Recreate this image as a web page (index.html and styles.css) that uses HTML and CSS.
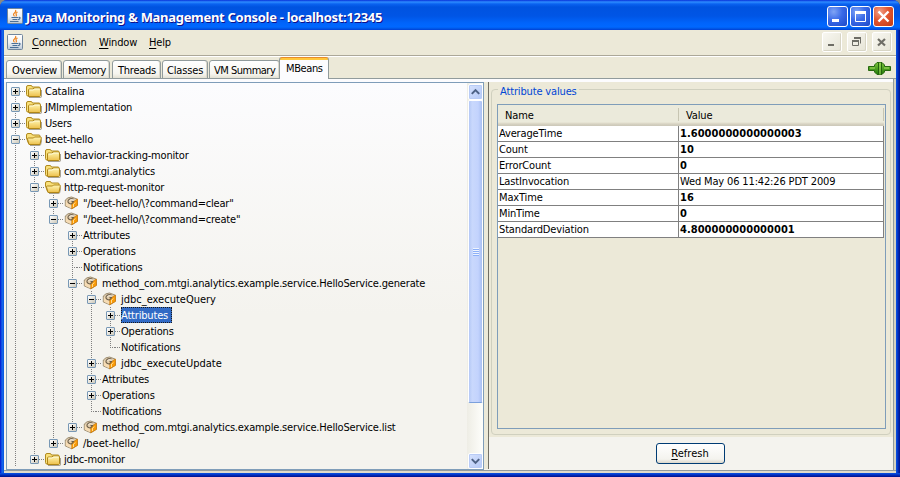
FILE: index.html
```html
<!DOCTYPE html>
<html lang="en">
<head>
<meta charset="utf-8">
<title>Java Monitoring &amp; Management Console</title>
<link rel="stylesheet" href="styles.css">
</head>
<body>
<svg width="0" height="0" class="defs">
  <defs>
    <linearGradient id="gold" x1="0" y1="0" x2="0" y2="1"><stop offset="0" stop-color="#fff6b4"/><stop offset="1" stop-color="#edc04a"/></linearGradient>
    <linearGradient id="tile" x1="0" y1="0" x2="0" y2="1"><stop offset="0" stop-color="#ffffff"/><stop offset=".55" stop-color="#eef1f4"/><stop offset="1" stop-color="#b9c7d6"/></linearGradient>
    <linearGradient id="plug" x1="0" y1="0" x2="0" y2="1"><stop offset="0" stop-color="#7cc43c"/><stop offset="1" stop-color="#1f7a06"/></linearGradient>
    <symbol id="folder" viewBox="0 0 16 16">
      <path d="M3 14.500h11.500q1 0 1-1V7" fill="none" stroke="#6f6850" stroke-opacity=".6"/>
      <path d="M.5 11.500V4q0-1.500 1.500-1.500h3q1 0 1.500 1.500h6.500q1 0 1 1v8h-12q-1.500 0-1.500-1.500z" fill="#f9e07a" stroke="#b08a20"/>
      <path d="M2.500 13.500V7q0-1 1-1h3.500l1-1h5.500q1 0 1 1v6.500q0 1-1 1z" fill="url(#gold)" stroke="#b08618"/>
      <path d="M3.500 7h4l1-1h5" fill="none" stroke="#fffde0" stroke-width=".9"/>
    </symbol>
    <symbol id="open" viewBox="0 0 16 16">
      <path d="M4 14.500h9.500q1 0 1.200-1L16 8" fill="none" stroke="#6f6850" stroke-opacity=".6"/>
      <path d="M2.500 12.500L.5 7V4Q.5 2.500 2 2.500h3q1 0 1.500 1.500h6.500q1 0 1 1V12z" fill="#f9e07a" stroke="#b08a20"/>
      <path d="M3 13.500L1.500 8q-.2-1 .8-1h5.200l1-1h6q1 0 .8 1l-1.300 6.500z" fill="url(#gold)" stroke="#b08618"/>
    </symbol>
    <symbol id="bean" viewBox="0 0 16 16">
      <path d="M1.300 5L4 2.800 7.500 2l5.500 2 .5 6L8 13.800 1.300 11z" fill="#e0cdae" stroke="#948468" stroke-width=".9"/>
      <path d="M7.500 8l6-4v6.500l-6 3.300z" fill="#f99a06" stroke="#c87a10" stroke-width=".7"/>
      <path d="M1.800 6l5.500 2v5.200l-5.500-2.500z" fill="#f6dcb4"/>
      <path d="M9.500 4Q6 2.800 4.500 5t1 3.500 4-2H7.500" fill="none" stroke="#6e604c" stroke-width="1.100"/>
      <path d="M5.500 5.500Q7 3.800 9.500 5" fill="none" stroke="#fffaf0" stroke-width=".8"/>
      <path d="M9.500 12V9l2-1.300" fill="none" stroke="#ffe2a0" stroke-width=".9"/>
    </symbol>
    <symbol id="java" viewBox="0 0 16 16">
      <rect x=".5" y=".5" width="15" height="15" rx="1" fill="url(#tile)" stroke="#71869c"/>
      <path d="M8.500 2Q9.500 3.500 7.500 5T7.500 8.300M10.500 4Q8 5.500 9.500 7L8.800 8.500" fill="none" stroke="#ee8118" stroke-width="1.100"/>
      <path d="M4.500 9.500h6.500M11.500 9.500q2-.5 1.500.8t-2 1.200M5.500 11.500h5M3 13.500h8.500" fill="none" stroke="#4a7098" stroke-width="1.100"/>
    </symbol>
  </defs>
</svg>
<div class="window">
  <header class="titlebar">
    <svg class="app"><use href="#java"/></svg>
    <h1>Java Monitoring &amp; Management Console - localhost:12345</h1>
    <div class="wbtns">
      <span class="wb"><svg viewBox="0 0 19 19"><path d="M4 13.500h7" stroke="#fff" stroke-width="3"/></svg></span>
      <span class="wb"><svg viewBox="0 0 19 19"><path d="M4 5.500h11" stroke="#fff" stroke-width="3"/><path d="M4.500 5v9.500h10V5" fill="none" stroke="#fff"/></svg></span>
      <span class="wb close"><svg viewBox="0 0 19 19"><path d="M4.500 4.500l10 10M14.500 4.500l-10 10" stroke="#fff" stroke-width="2.400"/></svg></span>
    </div>
  </header>
  <nav class="menubar">
    <svg class="app"><use href="#java"/></svg>
    <span class="m1"><u>C</u>onnection</span><span class="m2"><u>W</u>indow</span><span class="m3"><u>H</u>elp</span>
    <div class="ibtns">
      <span><svg viewBox="0 0 18 18"><path d="M5 12h6" stroke="#6e6d66" stroke-width="2"/></svg></span>
      <span><svg viewBox="0 0 18 18"><path d="M6 5h7M4 8h7" stroke="#6e6d66" stroke-width="2"/><path d="M12.500 5v5.500M4.500 8v4.500h6V8" fill="none" stroke="#6e6d66"/></svg></span>
      <span><svg viewBox="0 0 18 18"><path d="M5 6l7 6.500M12 6l-7 6.500" stroke="#6e6d66" stroke-width="2.200"/></svg></span>
    </div>
  </nav>
  <div class="tabs">
    <span class="tab t1">Overview</span><span class="tab t2">Memory</span><span class="tab t3">Threads</span><span class="tab t4">Classes</span><span class="tab t5">VM Summary</span><span class="tab t6 on">MBeans</span>
    <svg class="plug" viewBox="0 0 24 14"><path d="M.5 5h6V3.500L9 1h5l2.500 2.500V5h6v4h-6v1.500L14 13H9l-2.500-2.500V9h-6z" fill="url(#plug)" stroke="#27680f"/><path d="M10.500 1v12M13.500 1v12" stroke="#23620c"/><path d="M12 1v12M2 6.500h5M16 6.500h5" stroke="#a5dd63"/></svg>
  </div>
  <main class="pane">
    <section class="treebox">
      <ul class="tree">
        <li><div class="row"><i class="ex plus"></i><svg><use href="#folder"/></svg><b>Catalina</b></div></li>
        <li><div class="row"><i class="ex plus"></i><svg><use href="#folder"/></svg><b>JMImplementation</b></div></li>
        <li><div class="row"><i class="ex plus"></i><svg><use href="#folder"/></svg><b>Users</b></div></li>
        <li class="more"><div class="row"><i class="ex"></i><svg><use href="#open"/></svg><b>beet-hello</b></div>
          <ul>
            <li><div class="row"><i class="ex plus"></i><svg><use href="#folder"/></svg><b>behavior-tracking-monitor</b></div></li>
            <li><div class="row"><i class="ex plus"></i><svg><use href="#folder"/></svg><b>com.mtgi.analytics</b></div></li>
            <li><div class="row"><i class="ex"></i><svg><use href="#open"/></svg><b>http-request-monitor</b></div>
              <ul>
                <li><div class="row"><i class="ex plus"></i><svg><use href="#bean"/></svg><b class="q">"/beet-hello/\?command=clear"</b></div></li>
                <li><div class="row"><i class="ex"></i><svg><use href="#bean"/></svg><b class="q">"/beet-hello/\?command=create"</b></div>
                  <ul>
                    <li><div class="row"><i class="ex plus"></i><b>Attributes</b></div></li>
                    <li><div class="row"><i class="ex plus"></i><b>Operations</b></div></li>
                    <li><div class="row"><i class="leaf"></i><b>Notifications</b></div></li>
                    <li><div class="row"><i class="ex"></i><svg><use href="#bean"/></svg><b>method_com.mtgi.analytics.example.service.HelloService.generate</b></div>
                      <ul>
                        <li><div class="row"><i class="ex"></i><svg><use href="#bean"/></svg><b class="j">jdbc_executeQuery</b></div>
                          <ul>
                            <li><div class="row"><i class="ex plus"></i><b class="sel">Attributes</b></div></li>
                            <li><div class="row"><i class="ex plus"></i><b>Operations</b></div></li>
                            <li><div class="row"><i class="leaf"></i><b>Notifications</b></div></li>
                          </ul>
                        </li>
                        <li><div class="row"><i class="ex plus"></i><svg><use href="#bean"/></svg><b class="j">jdbc_executeUpdate</b></div></li>
                        <li><div class="row"><i class="ex plus"></i><b>Attributes</b></div></li>
                        <li><div class="row"><i class="ex plus"></i><b>Operations</b></div></li>
                        <li><div class="row"><i class="leaf"></i><b>Notifications</b></div></li>
                      </ul>
                    </li>
                    <li><div class="row"><i class="ex plus"></i><svg><use href="#bean"/></svg><b>method_com.mtgi.analytics.example.service.HelloService.list</b></div></li>
                  </ul>
                </li>
                <li><div class="row"><i class="ex plus"></i><svg><use href="#bean"/></svg><b class="j">/beet-hello/</b></div></li>
              </ul>
            </li>
            <li><div class="row"><i class="ex plus"></i><svg><use href="#folder"/></svg><b>jdbc-monitor</b></div></li>
          </ul>
        </li>
      </ul>
      <div class="scroll">
        <span class="sb"><svg viewBox="0 0 14 14"><path d="M3 9l4-4 4 4" fill="none" stroke="#4d6185" stroke-width="2.200"/></svg></span>
        <span class="thumb"><i></i></span>
        <span class="sb down"><svg viewBox="0 0 14 14"><path d="M3 5l4 4 4-4" fill="none" stroke="#4d6185" stroke-width="2.200"/></svg></span>
      </div>
    </section>
    <div class="split"></div>
    <section class="right">
      <div class="groupwrap">
        <fieldset>
          <legend>Attribute values</legend>
          <div class="table">
            <div class="tr head"><span>Name</span><span>Value</span></div>
            <div class="tr"><span>AverageTime</span><strong>1.6000000000000003</strong></div>
            <div class="tr"><span>Count</span><strong>10</strong></div>
            <div class="tr"><span>ErrorCount</span><strong>0</strong></div>
            <div class="tr"><span>LastInvocation</span><span>Wed May 06 11:42:26 PDT 2009</span></div>
            <div class="tr"><span>MaxTime</span><strong>16</strong></div>
            <div class="tr"><span>MinTime</span><strong>0</strong></div>
            <div class="tr"><span>StandardDeviation</span><strong>4.800000000000001</strong></div>
          </div>
        </fieldset>
      </div>
      <div class="actions"><button type="button"><span><u>R</u>efresh</span></button></div>
    </section>
  </main>
</div>
</body>
</html>
```
FILE: styles.css
```css
* { box-sizing: border-box; }
body {
  margin: 0;
  width: 900px;
  height: 477px;
  overflow: hidden;
  background: #8a8a84;
  font: 11px/16px "DejaVu Sans Condensed", "DejaVu Sans", sans-serif;
  letter-spacing: -0.15px;
  color: #000;
}
.defs { position: absolute; }
svg { display: block; flex: none; }
u { text-decoration: underline; text-underline-offset: 2px; text-decoration-thickness: 1px; }
.window {
  display: flex;
  flex-direction: column;
  height: 477px;
  border-radius: 7px 7px 0 0;
  padding: 0 4px 4px;
  background:
    linear-gradient(#0855dd, #0441d8 1px, #001ea0 3px, #00138c) 0 100% / 100% 4px no-repeat,
    linear-gradient(90deg, #0019cf 0, #0831d9 1px, #166aee 2px, #0855dd 4px, #0855dd 896px, #0441d8 897px, #001ea0 899px, #00138c 900px);
}
.titlebar {
  display: flex;
  align-items: center;
  height: 30px;
  flex: none;
  margin: 0 -4px;
  padding: 0 6px 0 7px;
  border-radius: 7px 7px 0 0;
  background: linear-gradient(#0831d9 0, #2d8cff 2px, #0a62f0 4px, #0053e0 7px, #0055e5 16px, #0064fb 23px, #0068ff 27px, #0052e0 29px, #003dd7 30px);
}
.app { width: 16px; height: 16px; }
.titlebar .app { margin-top: 1px; }
h1 {
  margin: 4px 0 0 3px;
  flex: 1;
  font: bold 13px/18px "Noto Sans", sans-serif;
  letter-spacing: -0.3px;
  color: #fff;
  text-shadow: 1px 1px #0f1089;
  white-space: nowrap;
}
.wbtns { display: flex; gap: 2px; margin-top: 3px; }
.wb {
  width: 21px;
  height: 21px;
  border: 1px solid #fff;
  border-radius: 3px;
  background: radial-gradient(circle at 30% 25%, #7fa4f5, #3a6ae8 45%, #1c48c8);
}
.wb svg { width: 19px; height: 19px; }
.close { background: radial-gradient(circle at 30% 25%, #f0a088, #e2552f 45%, #c23a14); }
.menubar {
  display: flex;
  align-items: center;
  height: 27px;
  flex: none;
  padding: 0 4px 2px 3px;
  background: #ece9d8;
  border-bottom: 1px solid #fff;
  box-shadow: inset 0 -1px #aca899;
}
.menubar > span { margin-top: 1px; }
.m1 { width: 54px; margin-left: 9px; }
.m2 { width: 38px; margin-left: 13px; }
.m3 { margin-left: 12px; }
.ibtns { display: flex; gap: 5px; margin-left: auto; }
.ibtns span {
  width: 20px;
  height: 20px;
  border: 1px solid #fff;
  border-radius: 2px;
  background: linear-gradient(135deg, #f8f7f1, #e6e4d6);
  box-shadow: inset -1px -1px #d8d5c5;
}
.ibtns svg { width: 18px; height: 18px; }
.tabs {
  display: flex;
  align-items: flex-end;
  height: 22px;
  flex: none;
  padding-left: 2px;
  background: linear-gradient(#919b9c, #919b9c) 0 21px / 100% 1px no-repeat #ece9d8;
}
.tab {
  height: 19px;
  padding-left: 5px;
  line-height: 20px;
  border: 1px solid #919b9c;
  border-radius: 3px 3px 0 0;
  background: linear-gradient(#fff, #f6f5ef 75%, #e4e1d3);
  box-shadow: inset -1px 0 #dcd9cb;
  white-space: nowrap;
}
.t1 { width: 56px; letter-spacing: -0.2px; }
.t2 { width: 47px; margin-left: 1px; padding-left: 4px; letter-spacing: -0.4px; }
.t3 { width: 49px; margin-left: 2px; letter-spacing: -0.25px; }
.t4 { width: 46px; margin-left: 1px; padding-left: 4px; }
.t5 { width: 71px; margin-left: 1px; padding-left: 4px; letter-spacing: -0.5px; }
.on {
  width: 50px;
  height: 22px;
  margin-left: -1px;
  padding-left: 6px;
  line-height: 21px;
  border-top: 1px solid #e68b2c;
  border-bottom: 0;
  letter-spacing: -0.4px;
  background: linear-gradient(#ffc73c 2px, #fcfcfe 2px);
  box-shadow: none;
}
.plug { width: 24px; height: 15px; margin: 0 4px 3px auto; }
.pane {
  display: flex;
  height: 394px;
  flex: none;
  padding: 3px 0 2px 2px;
  background: linear-gradient(#fcfcfe, #fcfcfe) 0 0 / 100% 3px no-repeat #f4f3ee;
  border-bottom: 2px solid #dfdccb;
  box-shadow: inset 0 -1px #919b9c, inset -2px 0 #d4d1c1, inset -3px 0 #919b9c;
}
.treebox {
  display: flex;
  width: 478px;
  height: 388px;
  border: 1px solid #7f9db9;
  background: linear-gradient(#fcfcfe, #f4f3ee 60%);
}
ul { list-style: none; margin: 0; padding: 0 0 0 19px; }
.tree { flex: 1; padding-left: 4px; overflow: hidden; }
li { position: relative; }
li::before {
  content: "";
  position: absolute;
  left: 4px;
  top: 0;
  bottom: 0;
  width: 1px;
  background: repeating-linear-gradient(#808080 0 1px, transparent 1px 2px);
}
li:last-child::before { bottom: auto; height: 8px; }
li.more:last-child::before { bottom: 0; height: auto; }
.tree > li:first-child::before { top: 8px; }
.row { display: flex; align-items: center; height: 16px; white-space: nowrap; }
.row::before {
  content: "";
  order: 1;
  width: 6px;
  height: 1px;
  flex: none;
  background: repeating-linear-gradient(90deg, #808080 0 1px, transparent 1px 2px);
}
.row svg { width: 16px; height: 16px; order: 2; margin-right: 3px; }
.row b { order: 3; font-weight: normal; padding-top: 2px; letter-spacing: -0.18px; }
.row .j { letter-spacing: 0; }
.row .q { letter-spacing: -0.2px; }
.ex {
  position: relative;
  width: 9px;
  height: 9px;
  flex: none;
  border: 1px solid #7898b5;
  border-radius: 1px;
  background: linear-gradient(#000, #000) 1px 3px / 5px 1px no-repeat, linear-gradient(135deg, #fff, #cdc8b8);
}
.plus { background: linear-gradient(#000, #000) 1px 3px / 5px 1px no-repeat, linear-gradient(#000, #000) 3px 1px / 1px 5px no-repeat, linear-gradient(135deg, #fff, #cdc8b8); }
.leaf {
  width: 5px;
  height: 1px;
  margin-left: 4px;
  background: repeating-linear-gradient(90deg, #808080 0 1px, transparent 1px 2px);
}
.row .sel {
  width: 51px;
  height: 16px;
  line-height: 14px;
  background: #316ac5;
  color: #fff;
  border: 1px dotted #1a1a1a;
  padding: 1px 0 0;
  text-indent: -1px;
}
.scroll {
  display: flex;
  flex-direction: column;
  width: 16px;
  padding: 1px 0 0 1px;
  background: linear-gradient(90deg, #eeede5, #fefefb);
}
.sb {
  width: 15px;
  height: 16px;
  border: 1px solid #fff;
  border-radius: 2px;
  background: linear-gradient(135deg, #d6e2fe, #b4c8f6);
  box-shadow: inset 0 0 0 1px #b8cbf6;
}
.sb svg { width: 13px; height: 14px; }
.thumb {
  display: flex;
  align-items: center;
  justify-content: center;
  height: 303px;
  width: 15px;
  border: 1px solid #fff;
  border-bottom: 1px solid #7ba0dc;
  border-radius: 2px;
  background: linear-gradient(90deg, #b4c8f6, #c9d8fc 25%, #c3d3fd 70%, #a9bff2);
}
.thumb i { width: 6px; height: 8px; background: repeating-linear-gradient(#eef4fe 0 1px, #8cb0f8 1px 2px); }
.down { margin-top: auto; }
.split { width: 5px; background: #ece9d8; border-right: 1px solid #716f64; }
.right { flex: 1; display: flex; flex-direction: column; margin-right: 3px; }
.groupwrap { height: 355px; padding: 3px 2px 2px 2px; background: #ece9d8; }
fieldset {
  position: relative;
  height: 350px;
  margin: 0;
  padding: 15px 5px 5px 6px;
  border: 0;
}
fieldset::before {
  content: "";
  position: absolute;
  inset: 4px 0 0;
  border: 1px solid #d0d0bf;
  border-radius: 4px;
}
legend {
  position: absolute;
  left: 7px;
  top: -1px;
  padding: 0 2px;
  background: #ece9d8;
  color: #0046d5;
  letter-spacing: -0.15px;
}
.table { position: relative; height: 325px; margin-top: 4px; border: 1px solid #7f9db9; }
.tr { display: grid; grid-template-columns: 181px 205px; height: 16px; width: 386px; }
.tr > * {
  height: 16px;
  padding: 1px 0 0 1px;
  line-height: 14px;
  background: #fff;
  border-right: 1px solid #808080;
  border-bottom: 1px solid #808080;
  white-space: nowrap;
}
.tr strong { letter-spacing: .05px; }
.tr.head { height: 21px; }
.head > span {
  height: 21px;
  padding: 1px 0 0 7px;
  line-height: 19px;
  border: 0;
  background: linear-gradient(#c7c5b2, #c7c5b2) 100% 3px / 1px 13px no-repeat, linear-gradient(#ebeadb 17px, #e2decd 18px, #d6d2c2 19px, #cbc7b8 21px);
}
.actions { display: flex; justify-content: center; padding-top: 6px; height: 31px; }
button {
  width: 69px;
  height: 21px;
  margin-right: 2px;
  padding: 0;
  border: 1px solid #003c74;
  border-radius: 3px;
  background: linear-gradient(#fff, #f4f3ee 80%, #dcd8cc);
  font: inherit;
  line-height: 17px;
}
```
